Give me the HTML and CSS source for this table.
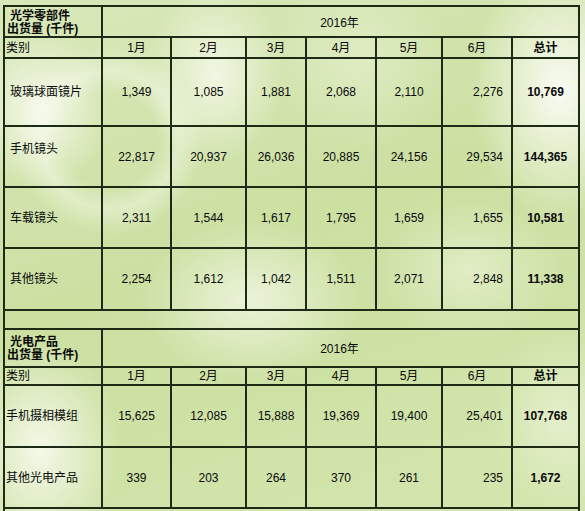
FILE: index.html
```html
<!DOCTYPE html>
<html>
<head>
<meta charset="utf-8">
<link rel="stylesheet" href="styles.css">
</head>
<body>
<div class="bg">
<table class="grid">
  <colgroup>
    <col class="c0"><col class="c1"><col class="c2"><col class="c3"><col class="c4"><col class="c5"><col class="c6"><col class="c7">
  </colgroup>
  <tr class="h1">
    <td class="title">光学零部件<br>出货量 (千件)</td>
    <td colspan="7" class="year">2016年</td>
  </tr>
  <tr class="h2">
    <td class="cat">类别</td>
    <td>1月</td><td>2月</td><td>3月</td><td>4月</td><td>5月</td><td class="last">6月</td><td class="tot">总计</td>
  </tr>
  <tr class="r68">
    <td class="lab">玻璃球面镜片</td>
    <td>1,349</td><td>1,085</td><td>1,881</td><td>2,068</td><td>2,110</td><td class="num6">2,276</td><td class="tot">10,769</td>
  </tr>
  <tr class="r61">
    <td class="lab up">手机镜头</td>
    <td>22,817</td><td>20,937</td><td>26,036</td><td>20,885</td><td>24,156</td><td class="num6">29,534</td><td class="tot">144,365</td>
  </tr>
  <tr class="r61">
    <td class="lab">车载镜头</td>
    <td>2,311</td><td>1,544</td><td>1,617</td><td>1,795</td><td>1,659</td><td class="num6">1,655</td><td class="tot">10,581</td>
  </tr>
  <tr class="r62">
    <td class="lab">其他镜头</td>
    <td>2,254</td><td>1,612</td><td>1,042</td><td>1,511</td><td>2,071</td><td class="num6">2,848</td><td class="tot">11,338</td>
  </tr>
  <tr class="gap"><td colspan="8"></td></tr>
  <tr class="h1b">
    <td class="title">光电产品<br>出货量 (千件)</td>
    <td colspan="7" class="year">2016年</td>
  </tr>
  <tr class="h2b">
    <td class="cat">类别</td>
    <td>1月</td><td>2月</td><td>3月</td><td>4月</td><td>5月</td><td class="last">6月</td><td class="tot">总计</td>
  </tr>
  <tr class="r62">
    <td class="lab2">手机摄相模组</td>
    <td>15,625</td><td>12,085</td><td>15,888</td><td>19,369</td><td>19,400</td><td class="num6">25,401</td><td class="tot">107,768</td>
  </tr>
  <tr class="r61">
    <td class="lab2">其他光电产品</td>
    <td>339</td><td>203</td><td>264</td><td>370</td><td>261</td><td class="num6">235</td><td class="tot">1,672</td>
  </tr>
  <tr class="tail"><td colspan="8"></td></tr>
</table>
</div>
</body>
</html>
```
FILE: styles.css
```css
html, body {
  margin: 0;
  padding: 0;
  width: 585px;
  height: 511px;
  overflow: hidden;
}
.bg {
  width: 585px;
  height: 511px;
  overflow: hidden;
  padding: 5px 0 0 3px;
  box-sizing: border-box;
  background:
    radial-gradient(ellipse 70px 80px at 40px 110px, rgba(250,252,244,0.85), rgba(250,252,244,0) 100%),
    radial-gradient(circle 95px at 110px 140px, rgba(245,250,235,0) 50%, rgba(245,250,235,0.45) 72%, rgba(245,250,235,0) 100%),
    radial-gradient(ellipse 90px 130px at 560px 90px, rgba(252,253,248,0.95), rgba(252,253,248,0) 100%),
    radial-gradient(ellipse 70px 90px at 215px 75px, rgba(248,251,240,0.8), rgba(248,251,240,0) 100%),
    radial-gradient(ellipse 110px 80px at 250px 300px, rgba(245,249,235,0.75), rgba(245,249,235,0) 100%),
    radial-gradient(ellipse 80px 110px at 40px 450px, rgba(250,252,244,0.85), rgba(250,252,244,0) 100%),
    radial-gradient(ellipse 70px 90px at 560px 420px, rgba(240,246,225,0.6), rgba(240,246,225,0) 100%),
    radial-gradient(ellipse 90px 70px at 470px 270px, rgba(240,246,225,0.55), rgba(240,246,225,0) 100%),
    radial-gradient(ellipse 90px 90px at 360px 60px, rgba(236,244,218,0.5), rgba(236,244,218,0) 100%),
    linear-gradient(160deg, #d9e8ba 0%, #cce0a2 45%, #cfe2a6 70%, #d4e6af 100%);
}
.grid {
  border-collapse: collapse;
  table-layout: fixed;
  width: 577px;
  font-family: "Liberation Sans", "Noto Sans CJK SC", sans-serif;
  font-size: 12px;
  color: #0a0a0a;
}
.grid td {
  border: 2px solid #1d2a15;
  padding: 0;
  text-align: center;
  vertical-align: middle;
  line-height: 14px;
  white-space: nowrap;
  overflow: hidden;
}
.c0 { width: 98px; }
.c1 { width: 69px; }
.c2 { width: 75px; }
.c3 { width: 60px; }
.c4 { width: 70px; }
.c5 { width: 66px; }
.c6 { width: 70px; }
.c7 { width: 67px; }

.h1 { height: 31px; }
.h2 { height: 21px; }
.r68 { height: 68px; }
.r61 { height: 61px; }
.r62 { height: 62px; }
.gap { height: 19px; }
.h1b { height: 38px; }
.h2b { height: 18px; }
.tail { height: 30px; }

.grid td.title {
  text-align: left;
  font-weight: bold;
  padding-left: 2px;
  text-indent: 3px;
  line-height: 13px;
  padding-top: 2px;
}
.grid td.year { padding-top: 2px; padding-right: 2px; }
.grid td.cat { text-align: left; padding-left: 1px; }
.grid td.lab { text-align: left; padding-left: 5px; }
.grid td.lab2 { text-align: left; padding-left: 1px; }
.grid td.up { vertical-align: top; padding-top: 15px; }
.grid td.tot { font-weight: bold; }
.grid td.num6 { text-align: right; padding-right: 8px; }
```
